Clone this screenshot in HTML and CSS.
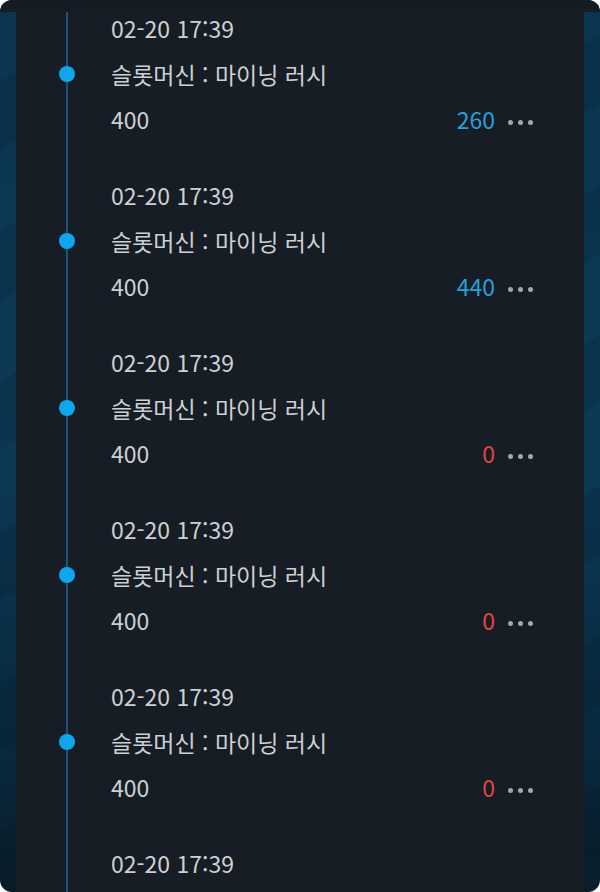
FILE: index.html
```html
<!DOCTYPE html>
<html lang="ko">
<head>
  <meta charset="UTF-8">
  <meta name="viewport" content="width=device-width, initial-scale=1.0">
  <title>게임 기록</title>
  <link rel="stylesheet" href="styles.css">
</head>
<body>
  <div class="screen">
    <div class="top-bar"></div>
    <div class="panel">
      <ul class="timeline">
        <li class="entry">
          <div class="entry-date">02-20 17:39</div>
          <span class="entry-dot"></span>
          <div class="entry-title">슬롯머신 : 마이닝 러시</div>
          <div class="entry-row">
            <span class="entry-bet">400</span>
            <span class="entry-win win">260</span>
            <span class="entry-more"><i></i><i></i><i></i></span>
          </div>
        </li>
        <li class="entry">
          <div class="entry-date">02-20 17:39</div>
          <span class="entry-dot"></span>
          <div class="entry-title">슬롯머신 : 마이닝 러시</div>
          <div class="entry-row">
            <span class="entry-bet">400</span>
            <span class="entry-win win">440</span>
            <span class="entry-more"><i></i><i></i><i></i></span>
          </div>
        </li>
        <li class="entry">
          <div class="entry-date">02-20 17:39</div>
          <span class="entry-dot"></span>
          <div class="entry-title">슬롯머신 : 마이닝 러시</div>
          <div class="entry-row">
            <span class="entry-bet">400</span>
            <span class="entry-win lose">0</span>
            <span class="entry-more"><i></i><i></i><i></i></span>
          </div>
        </li>
        <li class="entry">
          <div class="entry-date">02-20 17:39</div>
          <span class="entry-dot"></span>
          <div class="entry-title">슬롯머신 : 마이닝 러시</div>
          <div class="entry-row">
            <span class="entry-bet">400</span>
            <span class="entry-win lose">0</span>
            <span class="entry-more"><i></i><i></i><i></i></span>
          </div>
        </li>
        <li class="entry">
          <div class="entry-date">02-20 17:39</div>
          <span class="entry-dot"></span>
          <div class="entry-title">슬롯머신 : 마이닝 러시</div>
          <div class="entry-row">
            <span class="entry-bet">400</span>
            <span class="entry-win lose">0</span>
            <span class="entry-more"><i></i><i></i><i></i></span>
          </div>
        </li>
        <li class="entry">
          <div class="entry-date">02-20 17:39</div>
        </li>
      </ul>
    </div>
  </div>
</body>
</html>
```

FILE: styles.css
```css
html, body {
  margin: 0;
  height: 100%;
  background: #ffffff;
}

body {
  font-family: "Noto Sans CJK KR", "Noto Sans", sans-serif;
  color: #cdd0d3;
}

.screen {
  width: 600px;
  height: 892px;
  border-radius: 12px;
  overflow: hidden;
  display: flex;
  flex-direction: column;
  background:
    repeating-linear-gradient(150deg, rgba(0, 0, 0, 0) 0 70px, rgba(0, 10, 20, 0.12) 70px 130px),
    linear-gradient(180deg, #0a3550, #0b3a57 50%, #08283c 85%, #0a1d2a);
}

.top-bar {
  height: 12px;
  flex-shrink: 0;
  background: #151c24;
}

.panel {
  flex: 1;
  margin: 0 16px;
  background: #161d25;
  overflow: hidden;
}

.timeline {
  list-style: none;
  margin: 0;
  padding: 0;
  background: linear-gradient(#1c5579, #1c5579) no-repeat 50px 0 / 2px 100%;
  min-height: 100%;
}

.entry {
  display: grid;
  grid-template-columns: 95px 1fr;
  padding-bottom: 44px;
}

.entry-date,
.entry-title,
.entry-row {
  grid-column: 2;
  line-height: 32px;
  font-size: 23px;
}

.entry-title {
  margin-top: 14px;
}

.entry-row {
  margin-top: 13px;
  display: flex;
  align-items: center;
  padding-right: 51px;
}

.entry-dot {
  grid-column: 1;
  grid-row: 2;
  align-self: center;
  justify-self: start;
  margin-top: 14px;
  margin-left: 43px;
  width: 16px;
  height: 16px;
  border-radius: 50%;
  background: #0ea7ee;
}

.entry-bet {
  flex: 1;
}

.entry-win.win {
  color: #2a9fd8;
}

.entry-win.lose {
  color: #e04542;
}

.entry-more {
  display: flex;
  gap: 5px;
  margin-left: 13px;
  padding-top: 6px;
}

.entry-more i {
  width: 5px;
  height: 5px;
  border-radius: 50%;
  background: #a4a8ad;
}
```
